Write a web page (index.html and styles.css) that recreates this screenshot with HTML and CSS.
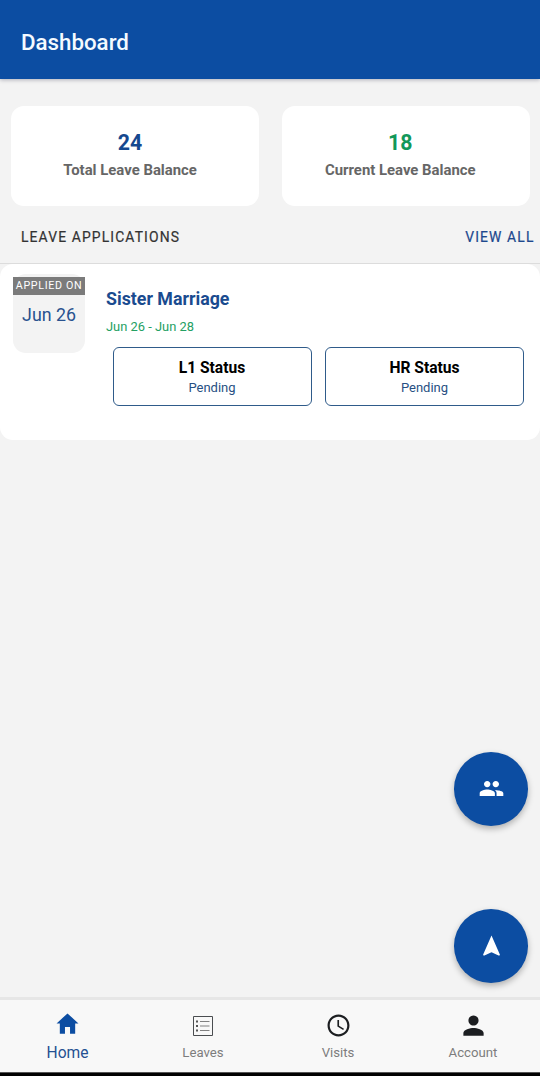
FILE: index.html
```html
<!DOCTYPE html>
<html lang="en">
<head>
<meta charset="utf-8">
<title>Dashboard</title>
<link rel="stylesheet" href="styles.css">
</head>
<body>
<div class="app">
  <header class="topbar"><h1 class="topbar-title">Dashboard</h1></header>
  <main class="content">
    <section class="balances">
      <div class="balance">
        <div class="balance-value">24</div>
        <div class="balance-label">Total Leave Balance</div>
      </div>
      <div class="balance">
        <div class="balance-value green">18</div>
        <div class="balance-label">Current Leave Balance</div>
      </div>
    </section>
    <div class="section-head">
      <h2 class="section-title">LEAVE APPLICATIONS</h2>
      <a class="view-all">VIEW ALL</a>
    </div>
    <article class="leave">
      <div class="applied">
        <div class="applied-tag">APPLIED ON</div>
        <div class="applied-date">Jun 26</div>
      </div>
      <div class="leave-body">
        <h3 class="leave-title">Sister Marriage</h3>
        <div class="leave-range">Jun 26 - Jun 28</div>
        <div class="statuses">
          <div class="status"><div class="status-name">L1 Status</div><div class="status-value">Pending</div></div>
          <div class="status"><div class="status-name">HR Status</div><div class="status-value">Pending</div></div>
        </div>
      </div>
    </article>
  </main>
  <div class="fabs">
    <div class="fab"><svg class="icon" viewBox="0 0 512 512"><path d="M337.454 232c33.599 0 61.092-27.002 61.092-60 0-32.997-27.493-60-61.092-60s-61.09 27.003-61.09 60c0 32.998 27.491 60 61.09 60zm-162.908 0c33.599 0 61.09-27.002 61.09-60 0-32.997-27.491-60-61.09-60s-61.092 27.003-61.092 60c0 32.998 27.493 60 61.092 60zm0 44C126.688 276 32 298.998 32 346v54h288v-54c0-47.002-97.599-70-145.454-70zm162.908 11.003c-6.105 0-10.325 0-17.454.997 23.426 17.003 32 28 32 58v54h128v-54c0-47.002-94.688-58.997-142.546-58.997z"/></svg></div>
    <div class="fab"><svg class="icon" viewBox="0 0 512 512"><path d="M256 64L96 433.062 110.938 448 256 384l145.062 64L416 433.062z"/></svg></div>
  </div>
  <nav class="tabs">
    <a class="tab active">
      <svg class="icon" viewBox="0 0 512 512"><path d="M208 448V320h96v128h97.6V256H464L256 64 48 256h62.4v192z"/></svg>
      <span class="tab-label">Home</span>
    </a>
    <a class="tab">
      <svg class="icon list" viewBox="0 0 27 27"><path class="frame" d="M3.5 4.5h19v19h-19z"/><path class="rows" d="M10 9.5h9.5M10 14h9.5M10 18.5h9.5"/><path class="dots" d="M6 9.5h2M6 14h2M6 18.5h2"/></svg>
      <span class="tab-label">Leaves</span>
    </a>
    <a class="tab">
      <svg class="icon" viewBox="0 0 512 512"><path d="M255.8 48C141 48 48 141.2 48 256s93 208 207.8 208c115 0 208.2-93.2 208.2-208S370.8 48 255.8 48zm.2 374.4c-91.9 0-166.4-74.5-166.4-166.4S164.1 89.6 256 89.6 422.4 164.1 422.4 256 347.9 422.4 256 422.4z"/><path d="M266.4 152h-31.2v124.8l109.1 65.5 15.7-25.6-93.6-55.5z"/></svg>
      <span class="tab-label">Visits</span>
    </a>
    <a class="tab">
      <svg class="icon" viewBox="0 0 512 512"><path d="M256 256c52.805 0 96-43.201 96-96s-43.195-96-96-96-96 43.201-96 96 43.195 96 96 96zm0 48c-63.598 0-192 32.402-192 96v48h384v-48c0-63.598-128.402-96-192-96z"/></svg>
      <span class="tab-label">Account</span>
    </a>
  </nav>
</div>
</body>
</html>
```
FILE: styles.css
```css
* { box-sizing: border-box; }
body { margin: 0; font-family: Roboto, "Liberation Sans", sans-serif; background: #f3f3f3; }
h1, h2, h3 { margin: 0; }
.app { position: relative; width: 540px; height: 1076px; display: flex; flex-direction: column; overflow: hidden; }
.topbar { height: 79px; padding: 28px 21px 0; background: #0c4da2; box-shadow: 0 1px 4px rgba(0, 0, 40, .28); }
.topbar-title { font-size: 22.3px; line-height: 28px; font-weight: 500; color: #f4faff; }
.content { flex: 1; }
.balances { display: grid; grid-template-columns: 1fr 1fr; gap: 22.4px; padding: 27.4px 10.5px 0 11.4px; }
.balance { height: 99.6px; padding-top: 22.6px; padding-right: 10.5px; border-radius: 13px; background: #fff; text-align: center; }
.balance-value { font-size: 21.3px; line-height: 28px; font-weight: 700; color: #15488f; }
.balance-value.green { color: #12985a; }
.balance-label { font-size: 14.9px; line-height: 20px; margin-top: 3px; font-weight: 700; color: #666; }
.section-head { display: flex; justify-content: space-between; height: 58px; padding: 21px 5.5px 0 21px; border-bottom: 1px solid #dcdcdc; line-height: 20px; }
.section-title, .view-all { font-size: 13.9px; font-weight: 400; letter-spacing: 1.12px; -webkit-text-stroke: .2px currentColor; }
.section-title { color: #333; }
.view-all { color: #1d488e; }
.leave { display: flex; gap: 21px; height: 176px; padding: 10px 16px 0 13px; border-radius: 13px; background: #fff; }
.applied { width: 72px; height: 79px; padding-top: 3px; border-radius: 13px; background: #f3f3f3; text-align: center; }
.applied-tag { height: 18px; line-height: 18px; font-size: 10.7px; letter-spacing: .65px; color: #fff; background: #7b7b7b; white-space: nowrap; }
.applied-date { margin-top: 8px; font-size: 17.8px; line-height: 24px; color: #29528f; }
.leave-body { flex: 1; padding-top: 13px; }
.leave-title { font-size: 17.8px; line-height: 24px; font-weight: 700; color: #1a4b8f; }
.leave-range { margin-top: 8px; font-size: 12.9px; line-height: 16px; color: #24a063; }
.statuses { display: grid; grid-template-columns: 1fr 1fr; gap: 13.5px; width: 418px; padding-left: 6.5px; margin-top: 12px; }
.status { height: 59px; padding-top: 10px; border: 1px solid #2f5b8a; border-radius: 6px; text-align: center; }
.status-name { font-size: 15.6px; line-height: 20px; font-weight: 700; color: #000; }
.status-value { margin-top: 1px; font-size: 13px; line-height: 18px; color: #275083; }
.fabs { position: absolute; right: 12px; top: 752px; display: flex; flex-direction: column; gap: 83.5px; }
.fab { width: 74px; height: 73.5px; display: grid; place-items: center; border-radius: 50%; background: #0c4da2; color: #fff; box-shadow: 0 3px 6px rgba(0, 0, 0, .28); }
.icon { width: 27px; height: 27px; display: block; fill: currentColor; }
.tabs { display: grid; grid-template-columns: repeat(4, 1fr); height: 79px; border-top: 3px solid #e6e6e6; border-bottom: 3px solid #000; background: #f8f8f8; box-shadow: inset 0 -1px #555; }
.tab { display: flex; flex-direction: column; align-items: center; padding: 12px 0 0 1px; color: #1c1e21; }
.tab-label { margin-top: 4px; font-size: 13.2px; line-height: 20px; color: #7d7d7d; }
.tab.active { padding: 10px 0 0; color: #0c4da2; }
.tab.active .tab-label { margin-top: 6px; font-size: 15.6px; color: #245092; }
.list { fill: none; }
.frame { stroke: #4a4d50; stroke-width: 1; }
.rows { stroke: #808080; stroke-width: 1.2; }
.dots { stroke: #555; stroke-width: 2; }
```
